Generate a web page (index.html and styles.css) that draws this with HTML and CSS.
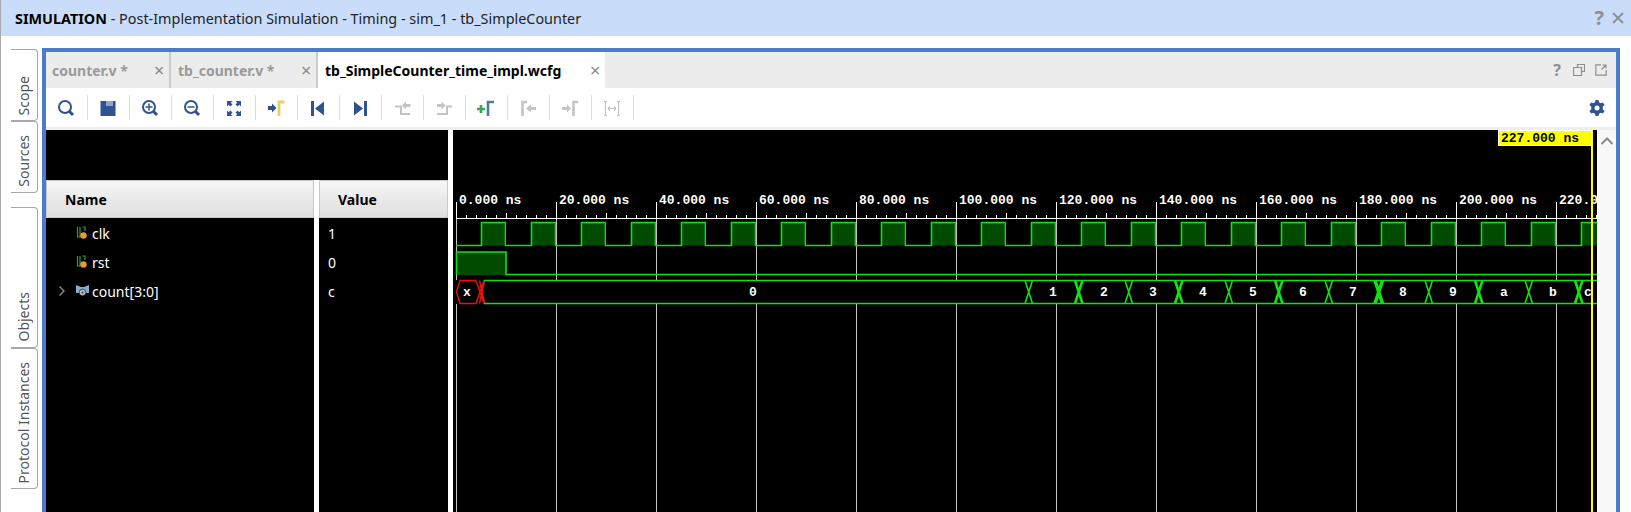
FILE: index.html
```html
<!DOCTYPE html>
<html lang="en">
<head>
<meta charset="utf-8">
<title>SIMULATION - tb_SimpleCounter</title>
<link rel="stylesheet" href="styles.css">
</head>
<body>
<header class="titlebar">
  <div class="title"><b>SIMULATION</b> - Post-Implementation Simulation - Timing - sim_1 - tb_SimpleCounter</div>
  <div class="title-actions">
    <span class="title-help">?</span>
    <svg class="title-close" viewBox="0 0 12 12"><path d="M1 1L11 11M11 1L1 11"/></svg>
  </div>
</header>
<main class="workspace">
  <nav class="sidetabs">
    <div class="sidetab tab-scope"><span>Scope</span></div>
    <div class="sidetab tab-sources"><span>Sources</span></div>
    <div class="sidetab tab-objects"><span>Objects</span></div>
    <div class="sidetab tab-protocol"><span>Protocol Instances</span></div>
  </nav>
  <section class="panel">
    <div class="tabstrip">
      <div class="tab tab-a"><span class="tab-label">counter.v *</span><span class="tab-x">×</span></div>
      <div class="tab tab-b"><span class="tab-label">tb_counter.v *</span><span class="tab-x">×</span></div>
      <div class="tab tab-active"><span class="tab-label">tb_SimpleCounter_time_impl.wcfg</span><span class="tab-x">×</span></div>
      <div class="strip-actions">
        <span class="strip-help">?</span>
        <svg class="strip-icon" viewBox="0 0 12 12"><path d="M4.5 3V.5h7v7H9M.5 3.5h8v8h-8z"/></svg>
        <svg class="strip-icon" viewBox="0 0 12 12"><path d="M6 .8H.8v10.4h10.4V6M6.5 5.5L11 1M7.500 1H11V4.500"/></svg>
      </div>
    </div>
    <div class="toolbar">
      <button class="tool"><svg class="ico" viewBox="0 0 20 20"><circle class="nv" cx="9" cy="9" r="6"/><path class="nv2" d="M13.500 13.500L17 17"/></svg></button>
      <button class="tool"><svg class="ico" viewBox="0 0 20 20"><path class="fill-nv" d="M2.500 3H8V8H14.500V3H17.500V18H2.500Z"/><path class="fill-nvl" d="M8 3H14.500V8H8Z"/></svg></button>
      <button class="tool"><svg class="ico" viewBox="0 0 20 20"><circle class="nv" cx="9" cy="9" r="6"/><path class="nv2" d="M13.500 13.500L17 17"/><path class="nv1" d="M9 5.500V12.500M5.500 9H12.500"/></svg></button>
      <button class="tool"><svg class="ico" viewBox="0 0 20 20"><circle class="nv" cx="9" cy="9" r="6"/><path class="nv2" d="M13.500 13.500L17 17"/><path class="nv1" d="M5.500 9H12.500"/></svg></button>
      <button class="tool"><svg class="ico" viewBox="0 0 20 20"><path class="fill-nv" d="M3 3H8.500L6.800 4.700L8.500 6.400L6.400 8.500L4.700 6.800L3 8.500ZM17 3V8.500L15.300 6.800L13.600 8.500L11.500 6.400L13.200 4.700L11.500 3ZM3 18V12.500L4.700 14.200L6.400 12.500L8.500 14.600L6.800 16.300L8.500 18ZM17 18H11.500L13.200 16.300L11.500 14.600L13.600 12.500L15.300 14.200L17 12.500Z"/></svg></button>
      <button class="tool"><svg class="ico" viewBox="0 0 20 20"><path class="fill-nv" d="M2 8H6V5.500L10.500 10L6 14.500V12H2Z"/><path class="yl" d="M13 18V4H18.500"/></svg></button>
      <button class="tool"><svg class="ico" viewBox="0 0 20 20"><path class="fill-nv" d="M3 3H6V18H3ZM16 3.500V17.500L7 10.500Z"/></svg></button>
      <button class="tool"><svg class="ico" viewBox="0 0 20 20"><path class="fill-nv" d="M14 3H17V18H14ZM4 3.500V17.500L13 10.500Z"/></svg></button>
      <button class="tool"><svg class="ico" viewBox="0 0 20 20"><path class="gy" d="M3 8.500H9V16H18"/><path class="fill-gy" d="M18.500 6H14V3.500L10 7.500L14 11.500V9H18.500Z"/></svg></button>
      <button class="tool"><svg class="ico" viewBox="0 0 20 20"><path class="gy" d="M3 16H13V8.500H18"/><path class="fill-gy" d="M3 6H7.500V3.500L11.500 7.500L7.500 11.500V9H3Z"/></svg></button>
      <button class="tool"><svg class="ico" viewBox="0 0 20 20"><path class="gn" d="M1 11H9M5 7V15"/><path class="bl" d="M12 18V4H18"/></svg></button>
      <button class="tool"><svg class="ico" viewBox="0 0 20 20"><path class="gy3" d="M4.500 18V4H9"/><path class="fill-gy" d="M18 9H13V6.500L8 10.500L13 14.500V12H18Z"/></svg></button>
      <button class="tool"><svg class="ico" viewBox="0 0 20 20"><path class="fill-gy" d="M2 9H7V6.500L11 10.500L7 14.500V12H2Z"/><path class="gy3" d="M13.500 18V4H18"/></svg></button>
      <button class="tool"><svg class="ico" viewBox="0 0 20 20"><path class="gy1" d="M2 3.500H5M3.500 3.500V17.500M2 17.500H5M15 3.500H18M16.500 3.500V17.500M15 17.500H18M6 10.500H14M6 10.500L8 8.500M6 10.500L8 12.500M14 10.500L12 8.500M14 10.500L12 12.500"/></svg></button>
      <div class="tool-spacer"></div>
      <svg class="gear" viewBox="0 0 16 16"><path class="fill-nv" fill-rule="evenodd" d="M6.500 0H9.500L10 2.300L11.700 3.300L14 2.500L15.500 5.100L13.700 6.700V9.300L15.500 10.900L14 13.500L11.700 12.700L10 13.700L9.500 16H6.500L6 13.700L4.300 12.700L2 13.500L.5 10.900L2.300 9.300V6.700L.5 5.100L2 2.500L4.300 3.300L6 2.300ZM8 5.500A2.500 2.500 0 1 0 8 10.500A2.500 2.500 0 1 0 8 5.500Z"/></svg>
    </div>
    <div class="rule"></div>
    <div class="viewer">
      <div class="signals">
        <div class="signals-top"></div>
        <div class="signals-cols">
          <div class="col col-name">
            <div class="col-head head-name">Name</div>
            <div class="row">
              <svg class="sig" viewBox="0 0 13 14"><path class="sig-g" d="M1.500 1V11H4V1M6.500 1H9V5"/><circle class="sig-o" cx="7.500" cy="9.500" r="3.200"/></svg>
              <span class="row-text">clk</span>
            </div>
            <div class="row">
              <svg class="sig" viewBox="0 0 13 14"><path class="sig-g" d="M1.500 1V11H4V1M6.500 1H9V5"/><circle class="sig-o" cx="7.500" cy="9.500" r="3.200"/></svg>
              <span class="row-text">rst</span>
            </div>
            <div class="row">
              <svg class="chev" viewBox="0 0 8 12"><path d="M1.500 1.500L6 6L1.500 10.500"/></svg>
              <svg class="sig" viewBox="0 0 13 14"><path class="bus-b" d="M0 1L5 3H8L13 1V9H0Z"/><circle class="bus-c" cx="6.500" cy="8.500" r="3.300"/><circle class="bus-d" cx="6.500" cy="8.500" r="1"/></svg>
              <span class="row-text">count[3:0]</span>
            </div>
          </div>
          <div class="col-gap"></div>
          <div class="col col-value">
            <div class="col-head head-value">Value</div>
            <div class="row row-value"><span class="row-text">1</span></div>
            <div class="row row-value"><span class="row-text">0</span></div>
            <div class="row row-value"><span class="row-text">c</span></div>
          </div>
        </div>
      </div>
      <div class="pane-gap"></div>
      <svg class="wave" viewBox="453 130 1144 382" width="1144" height="382">
        <defs>
          <pattern id="ticks" patternUnits="userSpaceOnUse" x="456" y="210" width="100" height="9">
            <path class="tk" d="M.5 9V0M10.500 9V5M20.500 9V5M30.500 9V5M40.500 9V5M50.500 9V3M60.500 9V5M70.500 9V5M80.500 9V5M90.500 9V5"/>
          </pattern>
          <pattern id="grid" patternUnits="userSpaceOnUse" x="456" y="0" width="100" height="10">
            <path class="gl" d="M.5 0V10"/>
          </pattern>
          <pattern id="clock" patternUnits="userSpaceOnUse" x="456" y="221" width="50" height="26">
            <rect class="hi" x="25.500" y="1.500" width="24.500" height="23"/>
            <path class="wv-line" d="M0 24.500H25.500V1.500H50M50 24.500H49.500V1.500"/>
          </pattern>
          <g id="x1"><path class="wv-line" d="M0 280.500L7.500 303.500M0 303.500L7.500 280.500"/></g>
          <g id="x2"><path class="wv-line thick" d="M0 280.500L7.500 303.500M0 303.500L7.500 280.500"/></g>
          <g id="x3"><path class="wv-line thicker" d="M0 280.500L7.500 303.500M0 303.500L7.500 280.500"/></g>
        </defs>
        <rect class="bg" x="453" y="130" width="1144" height="382"/>
        <rect x="453" y="218" width="1144" height="294" fill="url(#grid)"/>
        <path class="long-path" d="M456.500 202V218M556.500 202V218M656.500 202V218M756.500 202V218M856.500 202V218M956.500 202V218M1056.500 202V218M1156.500 202V218M1256.500 202V218M1356.500 202V218M1456.500 202V218M1556.500 202V218"/>
        <rect x="456" y="210" width="1141" height="9" fill="url(#ticks)"/>
        <rect class="ruler" x="456" y="218" width="1141" height="1"/>
        <g class="rt">
          <text x="459" y="204">0.000 ns</text>
          <text x="559" y="204">20.000 ns</text>
          <text x="659" y="204">40.000 ns</text>
          <text x="759" y="204">60.000 ns</text>
          <text x="859" y="204">80.000 ns</text>
          <text x="959" y="204">100.000 ns</text>
          <text x="1059" y="204">120.000 ns</text>
          <text x="1159" y="204">140.000 ns</text>
          <text x="1259" y="204">160.000 ns</text>
          <text x="1359" y="204">180.000 ns</text>
          <text x="1459" y="204">200.000 ns</text>
          <text x="1559" y="204">220.000 ns</text>
        </g>
        <rect x="456" y="221" width="1141" height="26" fill="url(#clock)"/>
        <rect class="hi" x="456.500" y="252" width="49.500" height="23"/>
        <path class="wv-line" d="M456.500 275V252H506V274.500H1597"/>
        <rect class="bg" x="456" y="280" width="1141" height="24"/>
        <path class="wv-red" d="M476 280.500H460L456.500 292L460 303.500H476M476 280.500L484 303.500M476 303.500L484 280.500M479.500 280.500L484.500 303.500M479.500 303.500L484.500 280.500"/>
        <path class="wv-line" d="M484 280.500H1597M484 303.500H1597"/>
        <g class="bus-x">
          <use href="#x1" x="1025"/><use href="#x2" x="1075"/><use href="#x1" x="1125"/><use href="#x2" x="1175"/>
          <use href="#x1" x="1225"/><use href="#x2" x="1275"/><use href="#x1" x="1325"/><use href="#x3" x="1375"/>
          <use href="#x1" x="1425"/><use href="#x2" x="1475"/><use href="#x1" x="1525"/><use href="#x2" x="1575"/>
        </g>
        <g class="bt">
          <text x="467" y="296">x</text>
          <text x="753" y="296">0</text>
          <text x="1053" y="296">1</text>
          <text x="1104" y="296">2</text>
          <text x="1153" y="296">3</text>
          <text x="1203" y="296">4</text>
          <text x="1253" y="296">5</text>
          <text x="1303" y="296">6</text>
          <text x="1353" y="296">7</text>
          <text x="1403" y="296">8</text>
          <text x="1453" y="296">9</text>
          <text x="1504" y="296">a</text>
          <text x="1553" y="296">b</text>
          <text x="1588" y="296">c</text>
        </g>
        <rect class="cursor" x="1591" y="130" width="2" height="382"/>
        <rect class="cur-bg" x="1498.500" y="130.500" width="93" height="15"/>
        <text class="cur-t" x="1501" y="142">227.000 ns</text>
      </svg>
      <div class="scrollbar">
        <svg class="scroll-up" viewBox="0 0 14 8"><path d="M1.500 7L7 1.500L12.500 7"/></svg>
      </div>
    </div>
  </section>
</main>
</body>
</html>
```

FILE: styles.css
```css
* { box-sizing: border-box; }
html, body { margin: 0; padding: 0; }
body {
  width: 1631px;
  height: 512px;
  overflow: hidden;
  background: #fff;
  border-left: 1px solid #a9a9a9;
  font-family: "Noto Sans", "Open Sans", sans-serif;
  font-size: 14px;
  display: flex;
  flex-direction: column;
}
.titlebar {
  height: 36px;
  flex: none;
  background: #c9ddfb;
  display: flex;
  align-items: center;
  justify-content: space-between;
  padding: 0 7px 0 14px;
  color: #222;
  font-size: 14.4px;
}
.title b { color: #000; }
.title-actions { display: flex; align-items: center; gap: 8px; }
.title-help { font-weight: 700; font-size: 20px; line-height: 1; color: #8e8e8e; }
.title-close { width: 12px; height: 12px; }
.title-close path { stroke: #8e8e8e; stroke-width: 1.8; fill: none; }

.workspace { flex: 1; display: flex; min-height: 0; padding-top: 12px; }
.sidetabs { width: 41px; flex: none; padding: 1px 0 0 10px; }
.sidetab {
  width: 27px;
  border: 1px solid #a8a8a8;
  border-left: none;
  border-radius: 0 4px 4px 0;
  display: flex;
  justify-content: center;
  align-items: flex-end;
  padding-bottom: 5px;
  color: #555;
}
.sidetab span { writing-mode: vertical-rl; transform: rotate(180deg); line-height: 1; }
.tab-scope { height: 72px; }
.tab-sources { height: 72px; }
.tab-objects { height: 141px; margin-top: 14px; }
.tab-protocol { height: 141px; }

.panel {
  width: 1578px;
  flex: none;
  border: 4px solid #4a7ccc;
  border-bottom: none;
  display: flex;
  flex-direction: column;
  min-height: 0;
}
.tabstrip { height: 36px; flex: none; background: #ececec; display: flex; align-items: stretch; }
.tab { display: flex; align-items: center; font-weight: 700; color: #9a9a9a; }
.tab-a { width: 125px; padding-left: 6px; border-right: 2px solid #ccc; }
.tab-b { width: 147px; padding-left: 7px; border-right: 2px solid #ccc; }
.tab-active { width: 287px; padding-left: 7px; background: #fff; color: #000; }
.tab-label { flex: 1; }
.tab-x { font-weight: 400; font-size: 18px; color: #888; width: 15px; line-height: 1; }
.strip-actions { margin-left: auto; display: flex; align-items: center; gap: 10px; padding-right: 9px; }
.strip-help { font-weight: 700; font-size: 16px; color: #8e8e8e; width: 12px; text-align: center; }
.strip-icon { width: 12px; height: 12px; }
.strip-icon path { fill: none; stroke: #8e8e8e; stroke-width: 1.2; }

.toolbar { height: 39px; flex: none; display: flex; align-items: center; background: #fff; }
.tool {
  width: 42px;
  height: 25px;
  flex: none;
  padding: 0 1px 0 0;
  border: none;
  border-right: 1px solid #dcdcdc;
  background: none;
  display: flex;
  align-items: center;
  justify-content: center;
}
.ico { width: 20px; height: 20px; }
.tool-spacer { flex: 1; }
.gear { width: 16px; height: 16px; margin-right: 11px; }
.nv { fill: none; stroke: #2f5290; stroke-width: 2; }
.nv1 { fill: none; stroke: #2f5290; stroke-width: 1.5; }
.nv2 { fill: none; stroke: #2f5290; stroke-width: 3; }
.fill-nv { fill: #2f5290; }
.fill-nvl { fill: #8fa3c4; }
.fill-gy { fill: #c4c4c4; }
.gy { fill: none; stroke: #c4c4c4; stroke-width: 2; }
.gy3 { fill: none; stroke: #c4c4c4; stroke-width: 2.6; }
.gy1 { fill: none; stroke: #c4c4c4; stroke-width: 1.2; }
.yl { fill: none; stroke: #e8cf6a; stroke-width: 2.8; }
.gn { fill: none; stroke: #3aa655; stroke-width: 2.6; }
.bl { fill: none; stroke: #4a7f9a; stroke-width: 2.6; }
.rule { height: 3px; flex: none; background: #eeeeee; }

.viewer { flex: 1; display: flex; min-height: 0; background: #000; }
.signals { width: 402px; flex: none; display: flex; flex-direction: column; }
.signals-top { height: 50px; flex: none; background: #000; }
.signals-cols { flex: 1; display: flex; min-height: 0; }
.col { display: flex; flex-direction: column; background: #000; color: #fff; }
.col-name { width: 268px; flex: none; }
.col-gap { width: 5px; flex: none; background: #fff; }
.col-value { flex: 1; }
.pane-gap { width: 5px; flex: none; background: #fff; }
.col-head {
  height: 38px;
  flex: none;
  display: flex;
  align-items: center;
  font-weight: 700;
  color: #000;
  background: linear-gradient(#f6f6f6, #dedede);
  border: 1px solid #c8c8c8;
}
.head-name { padding-left: 18px; }
.head-value { padding-left: 18px; }
.row { height: 29px; flex: none; display: flex; align-items: center; padding-left: 30px; gap: 3px; position: relative; }
.row-text { margin-top: 2px; }
.row-value { padding-left: 9px; }
.sig { width: 13px; height: 14px; flex: none; }
.chev { position: absolute; left: 12px; top: 9px; width: 8px; height: 12px; }
.chev path { fill: none; stroke: #8a8a8a; stroke-width: 1.4; }
.sig-g { fill: none; stroke: #2f9e44; stroke-width: 1.2; }
.sig-o { fill: #e9973a; }
.bus-b { fill: #84aecb; }
.bus-c { fill: #c0c0c0; stroke: #000; stroke-width: .6; }
.bus-d { fill: #333; }

.wave { display: block; flex: none; }
.bg { fill: #000; }
.gl { stroke: #c4c4c4; stroke-width: 1; fill: none; }
.tk, .long-path { stroke: #fff; stroke-width: 1; fill: none; }
.ruler { fill: #fff; }
.rt text, .bt text, .cur-t {
  font-family: "Liberation Mono", monospace;
  font-weight: 700;
  font-size: 13px;
}
.rt text, .bt text { fill: #fff; }
.bt text { text-anchor: middle; }
.hi { fill: #004b00; }
.wv-line { fill: none; stroke: #12e012; stroke-width: 1.6; }
.thick { stroke-width: 2.6; }
.thicker { stroke-width: 3.6; }
.wv-red { fill: none; stroke: #f01010; stroke-width: 1.4; }
.cursor { fill: #ffff00; }
.cur-bg { fill: #ffff00; stroke: #fff; stroke-width: 1; }
.cur-t { fill: #000; }

.scrollbar { width: 19px; flex: none; background: #f8f8f8; border-left: 1px solid #fff; display: flex; justify-content: center; align-items: flex-start; padding-top: 7px; }
.scroll-up { width: 14px; height: 8px; }
.scroll-up path { fill: none; stroke: #8a8a8a; stroke-width: 2; }
```
